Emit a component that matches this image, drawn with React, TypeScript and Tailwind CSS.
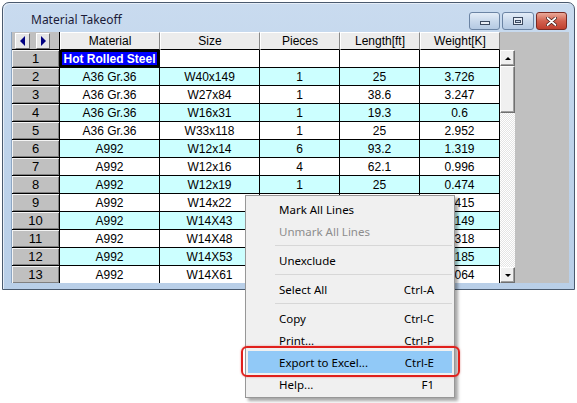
import React from "react";

type Row = [string, string, string, string, string];

const rows: Row[] = [
  ["Hot Rolled Steel", "", "", "", ""],
  ["A36 Gr.36", "W40x149", "1", "25", "3.726"],
  ["A36 Gr.36", "W27x84", "1", "38.6", "3.247"],
  ["A36 Gr.36", "W16x31", "1", "19.3", "0.6"],
  ["A36 Gr.36", "W33x118", "1", "25", "2.952"],
  ["A992", "W12x14", "6", "93.2", "1.319"],
  ["A992", "W12x16", "4", "62.1", "0.996"],
  ["A992", "W12x19", "1", "25", "0.474"],
  ["A992", "W14x22", "1", "18.9", "0.415"],
  ["A992", "W14X43", "1", "26.7", "1.149"],
  ["A992", "W14X48", "1", "27.5", "1.318"],
  ["A992", "W14X53", "1", "22.4", "1.185"],
  ["A992", "W14X61", "1", "17.4", "1.064"],
];

const colW = ["w-[100px]", "w-[100px]", "w-[80px]", "w-[80px]", "w-[80px]"];
const headers = ["Material", "Size", "Pieces", "Length[ft]", "Weight[K]"];

function Tri({ dir, color = "#000080", size = 5 }: { dir: "l" | "r" | "u" | "d"; color?: string; size?: number }) {
  const s = size;
  const pts =
    dir === "l"
      ? `${s},0 0,${s} ${s},${s * 2}`
      : dir === "r"
      ? `0,0 ${s},${s} 0,${s * 2}`
      : dir === "u"
      ? `0,${s} ${s},0 ${s * 2},${s}`
      : `0,0 ${s * 2},0 ${s},${s}`;
  const w = dir === "l" || dir === "r" ? s : s * 2;
  const h = dir === "l" || dir === "r" ? s * 2 : s;
  return (
    <svg width={w} height={h} viewBox={`0 0 ${w} ${h}`}>
      <polygon points={pts} fill={color} />
    </svg>
  );
}

function Bevel({ children, className = "" }: { children?: React.ReactNode; className?: string }) {
  return (
    <div
      className={
        "flex items-center justify-center bg-[#f0f0f0] border border-t-white border-l-white border-r-[#707070] border-b-[#707070] shadow-[inset_-1px_-1px_0_#a0a0a0] " +
        className
      }
    >
      {children}
    </div>
  );
}

type MenuItem = { label?: string; key?: string; disabled?: boolean; sep?: boolean; hi?: boolean };
const menu: MenuItem[] = [
  { label: "Mark All Lines" },
  { label: "Unmark All Lines", disabled: true },
  { sep: true },
  { label: "Unexclude" },
  { sep: true },
  { label: "Select All", key: "Ctrl-A" },
  { sep: true },
  { label: "Copy", key: "Ctrl-C" },
  { label: "Print...", key: "Ctrl-P" },
  { label: "Export to Excel...", key: "Ctrl-E", hi: true },
  { label: "Help...", key: "F1" },
];

export default function App() {
  return (
    <div className="relative w-[577px] h-[403px] bg-white overflow-hidden font-['Liberation_Sans',Arial,sans-serif]">
      {/* Window */}
      <div className="ml-[2px] mt-[2px] w-[573px] h-[288px] rounded-t-[7px] border border-[#4a5a6e] bg-gradient-to-b from-[#c9dbef] via-[#bed3ea] to-[#b9cfe8] flex flex-col shadow-[inset_1px_1px_0_#e6eef8]">
        {/* Title bar */}
        <div className="h-[29px] flex items-start shrink-0">
          <div className="ml-[28px] mt-[9px] leading-[16px] text-[12px] text-[#1b1b38] font-['Noto_Sans',sans-serif]">
            Material Takeoff
          </div>
          <div className="ml-auto mr-[7px] mt-[9px] flex gap-[2px]">
            <div className="w-[31px] h-[18px] rounded-[3px] border border-[#6b84a4] bg-gradient-to-b from-[#e4edf8] via-[#c9d9ec] to-[#b4c9e2] flex items-center justify-center">
              <div className="w-[10px] h-[4px] mt-[4px] bg-[#e8eef6] border border-[#3c4a60]" />
            </div>
            <div className="w-[32px] h-[18px] rounded-[3px] border border-[#6b84a4] bg-gradient-to-b from-[#e4edf8] via-[#c9d9ec] to-[#b4c9e2] flex items-center justify-center">
              <div className="w-[10px] h-[8px] bg-[#e8eef6] border border-[#3c4a60] flex items-center justify-center">
                <div className="w-[6px] h-[3px] border border-[#3c4a60] bg-[#c9d9ec]" />
              </div>
            </div>
            <div className="w-[31px] h-[18px] rounded-[3px] border border-[#7a2a22] bg-gradient-to-b from-[#e9a999] via-[#d2604e] to-[#c0402f] flex items-center justify-center">
              <svg width="11" height="9" viewBox="0 0 11 9">
                <path d="M1.5 1 L9.5 8 M9.5 1 L1.5 8" stroke="#3a1410" strokeWidth="3.2" strokeLinecap="round" />
                <path d="M1.5 1 L9.5 8 M9.5 1 L1.5 8" stroke="#ffffff" strokeWidth="1.8" strokeLinecap="round" />
              </svg>
            </div>
          </div>
        </div>

        {/* Client */}
        <div className="flex-1 ml-[8px] mr-[5px] mb-[6px] border-l border-[#8da6c3] bg-[#c0c0c0] flex overflow-hidden">
          {/* Table */}
          <div className="w-[488px] flex flex-col text-[12px] text-black">
            {/* Header */}
            <div className="flex h-[18px] shrink-0">
              <div className="w-[48px] h-[18px] bg-[#c0c0c0] flex items-center gap-[6px] pl-[3px] border-r border-b border-black">
                <div className="w-[15px] h-[16px] bg-[#e6e6e6] border border-t-white border-l-white border-r-[#707070] border-b-[#707070] flex items-center justify-center">
                  <Tri dir="l" size={5} />
                </div>
                <div className="w-[14px] h-[16px] bg-[#e6e6e6] border border-t-white border-l-white border-r-[#707070] border-b-[#707070] flex items-center justify-center">
                  <Tri dir="r" size={5} />
                </div>
              </div>
              {headers.map((h, i) => (
                <div
                  key={h}
                  className={`${colW[i]} h-[18px] bg-[#ececec] border border-t-white border-l-white border-r-[#8a8a8a] border-b-black flex items-center justify-center leading-none`}
                >
                  {h}
                </div>
              ))}
            </div>
            {/* Rows */}
            {rows.map((r, ri) => {
              const cyan = ri % 2 === 1;
              return (
                <div key={ri} className="flex h-[18px] shrink-0">
                  <div className="w-[48px] h-[18px] bg-[#c0c0c0] border-r border-b border-black flex items-center justify-center shadow-[inset_1px_1px_0_#f4f4f4,inset_-1px_-1px_0_#808080] text-[13px]">
                    {ri + 1}
                  </div>
                  {r.map((c, ci) => {
                    if (ri === 0 && ci === 0) {
                      return (
                        <div
                          key={ci}
                          className={`${colW[ci]} h-[18px] border-r border-b border-black bg-white p-0`}
                        >
                          <div className="h-full border-2 border-black bg-[#0000ff] text-white font-bold flex items-center justify-center leading-none">
                            {c}
                          </div>
                        </div>
                      );
                    }
                    return (
                      <div
                        key={ci}
                        className={`${colW[ci]} h-[18px] border-r border-b border-black flex items-center justify-center leading-none ${
                          cyan ? "bg-[#ccffff]" : "bg-white"
                        }`}
                      >
                        {c}
                      </div>
                    );
                  })}
                </div>
              );
            })}
          </div>
          {/* Scrollbar */}
          <div className="w-[15px] flex flex-col">
            <div className="h-[18px] shrink-0" />
            <Bevel className="h-[16px] shrink-0">
              <Tri dir="u" color="#000" size={3} />
            </Bevel>
            <Bevel className="h-[47px] shrink-0" />
            <div className="flex-1 bg-[repeating-conic-gradient(#ffffff_0_25%,#e4e4e4_0_50%)] bg-[length:2px_2px]" />
            <Bevel className="h-[16px] shrink-0">
              <Tri dir="d" color="#000" size={3} />
            </Bevel>
          </div>
          <div className="flex-1" />
        </div>
      </div>

      {/* Context menu */}
      <div className="absolute left-[245px] top-[195px] w-[210px] h-[203px] bg-[#f0f0f0] border border-[#979797] shadow-[3px_3px_3px_rgba(0,0,0,0.35)] pt-[2px] pb-[2px] font-['Noto_Sans',sans-serif] text-[11.5px]">
        {menu.map((m, i) =>
          m.sep ? (
            <div key={i} className="h-[7px] ml-[29px] mr-[2px] flex items-center">
              <div className="h-px w-full bg-[#d7d7d7]" />
            </div>
          ) : (
            <div
              key={i}
              className={`h-[22px] mx-[2px] pl-[31px] pr-[18px] flex items-center justify-between pt-px ${
                m.hi ? "bg-[#91c9f7]" : ""
              } ${m.disabled ? "text-[#8d8d8d]" : "text-black"}`}
            >
              <span>{m.label}</span>
              {m.key && <span>{m.key}</span>}
            </div>
          )
        )}
      </div>

      {/* Red highlight annotation */}
      <div className="absolute left-[241px] top-[346px] w-[219px] h-[31px] rounded-[6px] border-2 border-[#e0201c] shadow-[0_0_2px_rgba(224,32,28,0.5)]" />
    </div>
  );
}
